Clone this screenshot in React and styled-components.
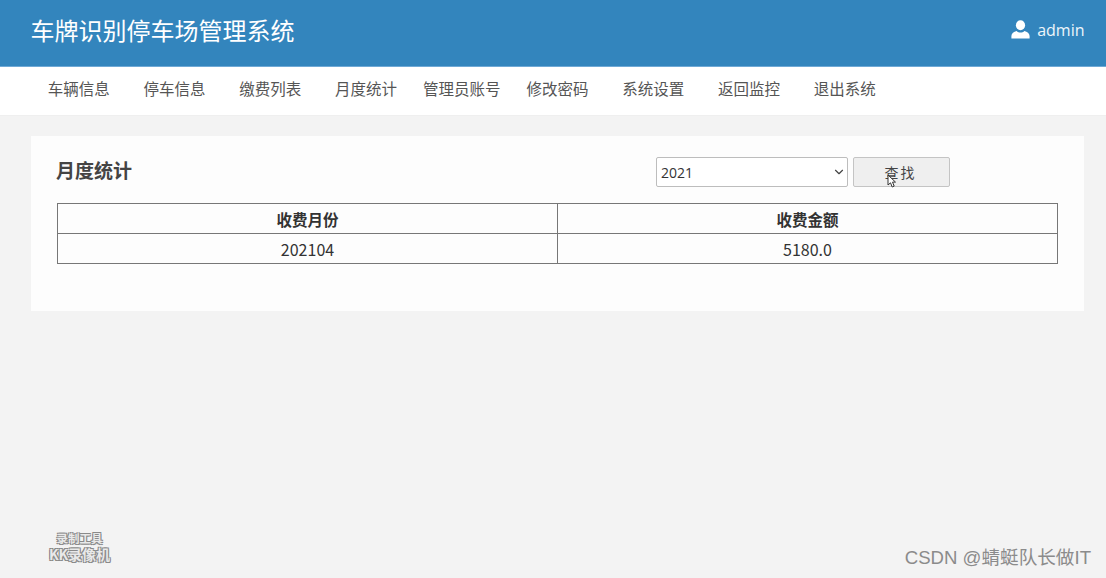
import React from 'react';
import styled, { createGlobalStyle } from 'styled-components';
import { ChevronDown } from 'lucide-react';

const cjk = '"Noto Sans CJK SC", "Open Sans", sans-serif';

const GlobalStyle = createGlobalStyle`
  html, body {
    margin: 0;
    height: 100%;
    overflow: hidden;
  }
  body {
    background: #f3f3f3;
    font-family: "Open Sans", "Noto Sans CJK SC", sans-serif;
  }
`;

const Page = styled.div`
  position: relative;
  height: 578px;
`;

const Header = styled.header`
  display: flex;
  align-items: center;
  justify-content: space-between;
  box-sizing: border-box;
  height: 67px;
  padding: 0 21.5px 7px 30.5px;
  background: #3385bd;
  border-bottom: 1px solid #6fa9d6;
  color: #fff;
`;

const Title = styled.h1`
  margin: 0;
  font-family: ${cjk};
  font-size: 24px;
  font-weight: 400;
  line-height: 34px;
`;

const User = styled.div`
  display: flex;
  align-items: center;
  gap: 7px;
  font-size: 16px;
  color: #eef5fa;
`;

const Nav = styled.nav`
  display: flex;
  box-sizing: border-box;
  height: 48px;
  padding: 0 31px;
  background: #fff;
  box-shadow: 0 1px 1px #efefef;
`;

const NavItem = styled.a`
  flex: 0 0 95.75px;
  font-family: ${cjk};
  font-size: 15.5px;
  line-height: 43px;
  text-align: center;
  white-space: nowrap;
  color: #555;
`;

const Card = styled.section`
  box-sizing: border-box;
  height: 175px;
  margin: 21px 22px 0 31px;
  padding: 21px 26px 0 26px;
  background: #fdfdfd;
`;

const CardTop = styled.div`
  display: flex;
  align-items: center;
  height: 30px;
  margin-bottom: 16px;
`;

const CardTitle = styled.h2`
  flex: 0 0 600px;
  margin: 0 0 5px -1px;
  font-family: ${cjk};
  font-size: 19px;
  font-weight: 700;
  color: #444;
`;

const SelectWrap = styled.div`
  position: relative;
  width: 192px;
  height: 30px;
`;

const YearSelect = styled.select`
  box-sizing: border-box;
  width: 100%;
  height: 100%;
  padding: 0 0 0 4px;
  appearance: none;
  border: 1px solid #bdbdbd;
  border-radius: 2px;
  background: #fff;
  font-family: "Open Sans", sans-serif;
  font-size: 14px;
  color: #333;
`;

const SelectArrow = styled(ChevronDown)`
  position: absolute;
  right: 2px;
  top: 8px;
  width: 14px;
  height: 14px;
  color: #444;
  pointer-events: none;
`;

const SearchWrap = styled.div`
  position: relative;
  margin-left: 5px;
`;

const SearchButton = styled.button`
  display: block;
  box-sizing: border-box;
  width: 97px;
  height: 30px;
  padding: 0 2px 0 0;
  border: 1px solid #c4c4c4;
  border-radius: 2px;
  background: #efefef;
  font-family: ${cjk};
  font-size: 14px;
  letter-spacing: 2px;
  color: #444;
`;

const Cursor = styled.svg`
  position: absolute;
  left: 34px;
  top: 17px;
  width: 10px;
  height: 14px;
`;

const Table = styled.table`
  width: 1001px;
  table-layout: fixed;
  border-collapse: collapse;
  font-family: ${cjk};
  color: #333;
`;

const Cell = styled.td`
  height: 29px;
  padding: 0;
  border: 1px solid #777;
  text-align: center;
  font-size: ${({ $head }) => ($head ? 15.5 : 16)}px;
  font-weight: ${({ $head }) => ($head ? 700 : 400)};
  line-height: 20px;
`;

const Recorder = styled.div`
  position: absolute;
  left: 46px;
  top: 531px;
  width: 67px;
  text-align: center;
  font-family: ${cjk};
  font-weight: 700;
  color: #e9e9e9;
  text-shadow: -1px -1px 0 #8a8a8a, 1px -1px 0 #8a8a8a, -1px 1px 0 #8a8a8a, 1px 1px 0 #8a8a8a;
`;

const RecorderLine = styled.div`
  font-size: ${({ $big }) => ($big ? 14 : 11.5)}px;
  line-height: ${({ $big }) => ($big ? 17 : 15)}px;
  white-space: nowrap;
`;

const Credit = styled.div`
  position: absolute;
  right: 15px;
  top: 545px;
  font-family: "Liberation Sans", ${cjk};
  font-size: 18.6px;
  line-height: 26px;
  color: #8b8b8b;
`;

const navItems = ['车辆信息', '停车信息', '缴费列表', '月度统计', '管理员账号', '修改密码', '系统设置', '返回监控', '退出系统'];

function UserIcon() {
  return (
    <svg width="19" height="19" viewBox="0 0 19 19" fill="#fff">
      <ellipse cx="9.5" cy="5.2" rx="4.6" ry="5" />
      <path d="M0.4 18.5v-2.6c0-2.7 2.4-4.3 5.2-5 1 1.1 2.4 1.6 3.9 1.6s2.9-.5 3.9-1.6c2.8.7 5.2 2.3 5.2 5v2.6z" />
    </svg>
  );
}

export default function App() {
  return (
    <Page>
      <GlobalStyle />
      <Header>
        <Title>车牌识别停车场管理系统</Title>
        <User>
          <UserIcon />
          admin
        </User>
      </Header>
      <Nav>
        {navItems.map((item) => (
          <NavItem key={item}>{item}</NavItem>
        ))}
      </Nav>
      <Card>
        <CardTop>
          <CardTitle>月度统计</CardTitle>
          <SelectWrap>
            <YearSelect defaultValue="2021">
              <option>2021</option>
              <option>2020</option>
            </YearSelect>
            <SelectArrow />
          </SelectWrap>
          <SearchWrap>
            <SearchButton>查找</SearchButton>
            <Cursor viewBox="0 0 10 14">
              <path d="M1 1v10l2.5-2.2L5.2 13l2-.9-1.7-4h3z" fill="#fff" stroke="#333" strokeWidth="1" />
            </Cursor>
          </SearchWrap>
        </CardTop>
        <Table>
          <tbody>
            <tr>
              <Cell as="th" $head>收费月份</Cell>
              <Cell as="th" $head>收费金额</Cell>
            </tr>
            <tr>
              <Cell>202104</Cell>
              <Cell>5180.0</Cell>
            </tr>
          </tbody>
        </Table>
      </Card>
      <Recorder>
        <RecorderLine>录制工具</RecorderLine>
        <RecorderLine $big>KK录像机</RecorderLine>
      </Recorder>
      <Credit>CSDN @蜻蜓队长做IT</Credit>
    </Page>
  );
}
